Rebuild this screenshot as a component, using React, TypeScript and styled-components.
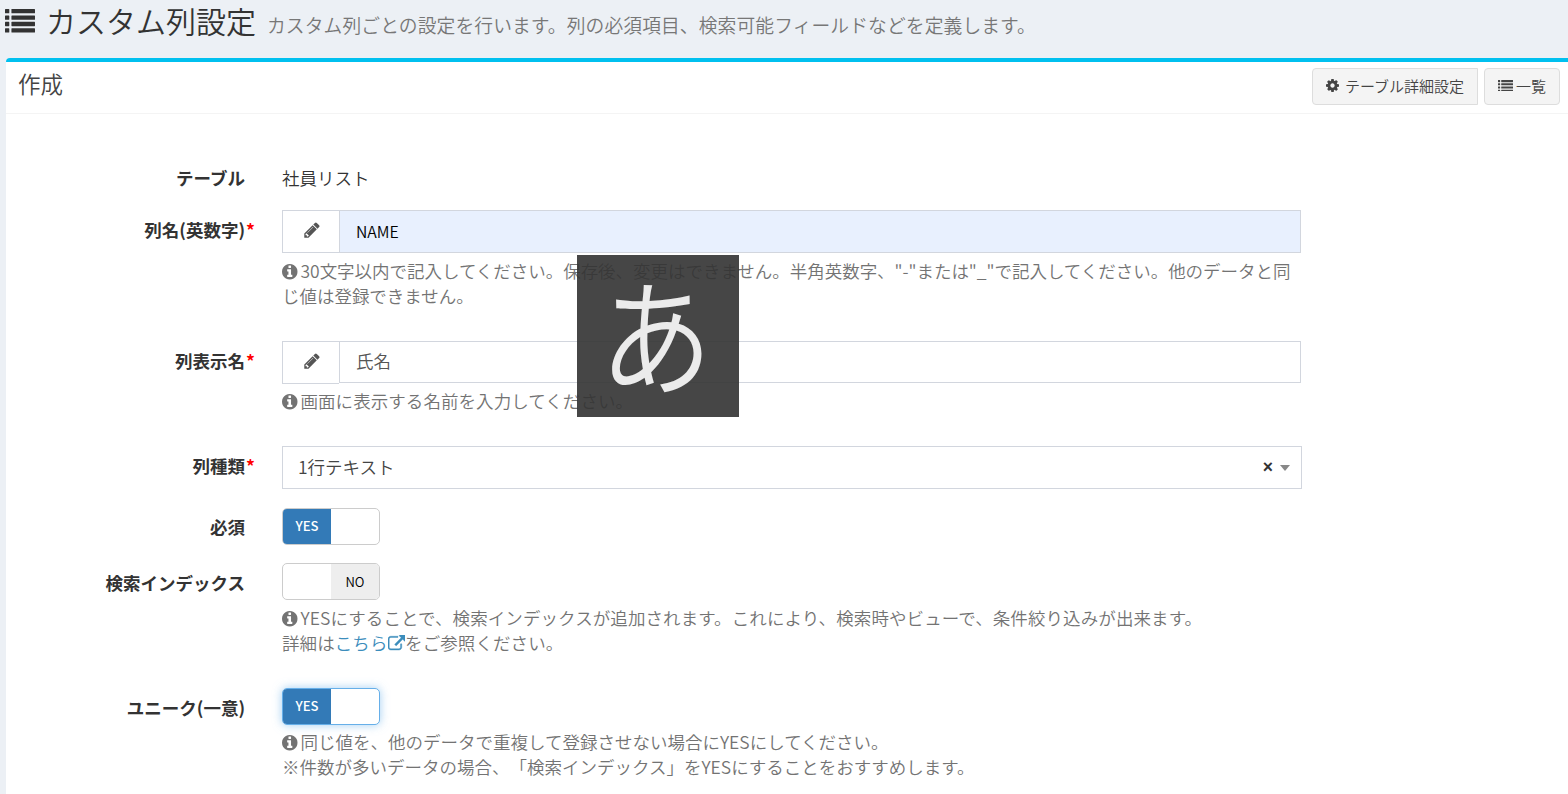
import React from 'react';
import styled, { createGlobalStyle, css } from 'styled-components';

const GlobalStyle = createGlobalStyle`
  * { box-sizing: border-box; }
  html, body { margin: 0; height: 100%; overflow: hidden; }
  body {
    background: #ecf0f5;
    color: #333;
    font-family: 'Noto Sans CJK JP', 'Noto Sans', sans-serif;
    font-size: 17.5px;
    line-height: 25px;
    font-weight: 350;
    text-spacing-trim: space-all;
  }
`;

const Page = styled.div`
  position: relative;
  height: 794px;
  display: flex;
  flex-direction: column;
  overflow: hidden;
  padding-left: 6px;
  white-space: nowrap;
`;

const PageHeader = styled.h1`
  display: flex;
  align-items: baseline;
  flex: none;
  height: 58px;
  margin: 0 0 0 -1px;
  font-size: 30px;
  line-height: 40px;
  font-weight: 350;
`;

const PageNote = styled.small`
  margin-left: 11px;
  font-size: 18.75px;
  letter-spacing: 0.11px;
  color: #777;
  font-weight: 350;
`;

const Box = styled.section`
  flex: 1;
  background: #fff;
  border-top: 4px solid #00c0ef;
  border-radius: 4px 0 0 0;
`;

const BoxHeader = styled.header`
  display: flex;
  align-items: flex-start;
  justify-content: space-between;
  height: 52px;
  padding: 6px 8px 0 12px;
  border-bottom: 1px solid #f4f4f4;
`;

const BoxTitle = styled.h3`
  margin: 0;
  font-size: 22.5px;
  line-height: 30px;
  font-weight: 350;
  color: #444;
`;

const Tools = styled.div`
  display: flex;
  gap: 6px;
`;

const ToolButton = styled.button<{ $gap: number; $radius?: string }>`
  display: flex;
  align-items: center;
  gap: ${(p) => p.$gap}px;
  height: 37px;
  padding: 0 13px 2px;
  border: 1px solid #ddd;
  border-radius: ${(p) => p.$radius ?? '4px'};
  background: #f4f4f4;
  color: #444;
  font: inherit;
  font-size: 15px;
`;

const Form = styled.form`
  display: flex;
  flex-direction: column;
  padding-top: 51px;
`;

const Row = styled.div<{ $after?: number }>`
  display: grid;
  grid-template-columns: 239px 1020px;
  column-gap: 37px;
  margin-bottom: ${(p) => p.$after ?? 33}px;
`;

const Label = styled.label<{ $top?: number }>`
  padding-top: ${(p) => p.$top ?? 7}px;
  text-align: right;
  font-weight: 700;
`;

const Required = styled.span`
  display: inline-block;
  width: 0;
  color: #f00;
  text-indent: 1px;
`;

const InputGroup = styled.div<{ $filled?: boolean }>`
  display: flex;
  align-items: flex-start;
  width: 1019px;
  height: ${(p) => (p.$filled ? 43 : 42)}px;
`;

const Addon = styled.span`
  display: flex;
  align-items: center;
  justify-content: center;
  width: 57px;
  height: 43px;
  padding: 0 0 3px 1px;
  border: 1px solid #d2d6de;
  border-right: 0;
  color: #555;
`;

const TextInput = styled.input<{ $filled?: boolean }>`
  flex: 1;
  height: ${(p) => (p.$filled ? 43 : 42)}px;
  padding: 0 16px ${(p) => (p.$filled ? 1 : 3)}px;
  border: 1px solid #d2d6de;
  border-radius: 0;
  outline: 0;
  background: ${(p) => (p.$filled ? '#e8f0fe' : '#fff')};
  color: ${(p) => (p.$filled ? '#000' : '#555')};
  font: inherit;
  font-size: ${(p) => (p.$filled ? 15.8 : 17.5)}px;
`;

const Select = styled.div`
  display: flex;
  align-items: center;
  height: 43px;
  padding: 0 11px 3px 15px;
  border: 1px solid #d2d6de;
  color: #444;
`;

const Clear = styled.span`
  margin-left: auto;
  margin-top: 3px;
  margin-right: 7px;
  font-family: 'Liberation Sans', sans-serif;
  font-weight: 700;
  color: #333;
`;

const Caret = styled.i`
  margin-top: 3px;
  border: 5px solid transparent;
  border-top: 6px solid #888;
  border-bottom: 0;
`;

const Help = styled.p<{ $top?: number; $spacing?: number }>`
  margin: ${(p) => p.$top ?? 5}px 0 0;
  color: #737373;
  font-weight: 350;
  letter-spacing: ${(p) => p.$spacing ?? 0}px;
`;

const Link = styled.a`
  color: #3c8dbc;
`;

const Switch = styled.div<{ $focus?: boolean }>`
  display: flex;
  width: 98px;
  height: 37px;
  border: 1px solid #ccc;
  border-radius: 5px;
  overflow: hidden;
  background: #fff;
  ${(p) =>
    p.$focus &&
    css`
      border-color: #66afe9;
      box-shadow: 0 0 10px rgba(102, 175, 233, 0.6);
    `}
`;

const SwitchSide = styled.span<{ $on?: boolean }>`
  display: flex;
  align-items: center;
  justify-content: center;
  width: 48px;
  height: 35px;
  padding-bottom: ${(p) => (p.$on ? 2 : 0)}px;
  margin-left: ${(p) => (p.$on ? 0 : 'auto')};
  background: ${(p) => (p.$on ? '#337ab7' : '#eee')};
  color: ${(p) => (p.$on ? '#fff' : '#000')};
  font-size: 13.1px;
  font-weight: ${(p) => (p.$on ? 500 : 350)};
`;

const ImeIndicator = styled.div`
  position: absolute;
  left: 577px;
  top: 255px;
  width: 162px;
  height: 162px;
  display: flex;
  align-items: center;
  justify-content: center;
  background: rgba(52, 52, 52, 0.91);
  color: #ebebeb;
  font-size: 127px;
  line-height: 1;
  font-weight: 350;
`;

const ImeGlyph = styled.span`
  transform: translate(-1.5px, -5.5px) scaleX(0.89);
`;

const Svg = styled.svg<{ $w: number; $h: number; $shift?: number; $right?: number }>`
  flex: none;
  width: ${(p) => p.$w}px;
  height: ${(p) => p.$h}px;
  vertical-align: ${(p) => p.$shift ?? 0}px;
  margin-right: ${(p) => p.$right ?? 0}px;
  fill: currentColor;
`;

const ListIcon = ({ size, right }: { size: number; right?: number }) => (
  <Svg $w={size} $h={(size * 1408) / 1792} $right={right} viewBox="0 0 1792 1408">
    {[0, 384, 768, 1152].map((y) => (
      <React.Fragment key={y}>
        <rect x="0" y={y} width="256" height="256" rx="32" />
        <rect x="384" y={y} width="1408" height="256" rx="32" />
      </React.Fragment>
    ))}
  </Svg>
);

const CogIcon = () => (
  <Svg $w={13} $h={13} viewBox="128 128 1536 1536">
    <path d="M1152 896q0-106-75-181t-181-75-181 75-75 181 75 181 181 75 181-75 75-181zm512-109v222q0 12-8 23t-20 13l-185 28q-19 54-39 91 35 50 107 138 10 12 10 25t-9 23q-27 37-99 108t-94 71q-12 0-26-9l-138-108q-44 23-91 38-16 136-29 186-7 28-36 28h-222q-14 0-24.5-8.5t-11.5-21.5l-28-184q-49-16-90-37l-141 107q-10 9-25 9-14 0-25-11-126-114-165-168-7-10-7-23 0-12 8-23 15-21 51-66.5t54-70.5q-27-50-41-99l-183-27q-13-2-21-12.5t-8-23.5v-222q0-12 8-23t19-13l186-28q14-46 39-92-40-57-107-138-10-12-10-24 0-10 9-23 26-36 98.5-107.5t94.5-71.5q13 0 26 10l138 107q44-23 91-38 16-136 29-186 7-28 36-28h222q14 0 24.5 8.5t11.5 21.5l28 184q49 16 90 37l142-107q9-9 24-9 13 0 25 10 129 119 165 170 7 8 7 22 0 12-8 23-15 21-51 66.5t-54 70.5q26 50 41 98l183 28q13 2 21 12.5t8 23.5z" />
  </Svg>
);

const PencilIcon = () => (
  <Svg $w={18} $h={18} viewBox="0 0 1792 1792">
    <path d="M491 1536l91-91-235-235-91 91v107h128v128h107zm523-928q0-22-22-22-10 0-17 7l-542 542q-7 7-7 17 0 22 22 22 10 0 17-7l542-542q7-7 7-17zm-54-192l416 416-832 832h-416v-416zm683 96q0 53-37 90l-166 166-416-416 166-165q36-38 90-38 53 0 91 38l235 234q37 39 37 91z" />
  </Svg>
);

const InfoIcon = () => (
  <Svg $w={15.5} $h={15.5} $shift={-1.5} $right={3} viewBox="128 128 1536 1536">
    <path d="M1152 1376v-160q0-14-9-23t-23-9h-96v-512q0-14-9-23t-23-9h-320q-14 0-23 9t-9 23v160q0 14 9 23t23 9h96v320h-96q-14 0-23 9t-9 23v160q0 14 9 23t23 9h448q14 0 23-9t9-23zm-128-896v-160q0-14-9-23t-23-9h-192q-14 0-23 9t-9 23v160q0 14 9 23t23 9h192q14 0 23-9t9-23zm640 416q0 209-103 385.5t-279.5 279.5-385.5 103-385.5-103-279.5-279.5-103-385.5 103-385.5 279.5-279.5 385.5-103 385.5 103 279.5 279.5 103 385.5z" />
  </Svg>
);

const ExternalIcon = () => (
  <Svg $w={17.5} $h={17.5} $shift={-2} viewBox="0 0 1792 1792">
    <path stroke="currentColor" strokeWidth="40" d="M1408 928v320q0 119-84.5 203.5t-203.5 84.5h-832q-119 0-203.5-84.5t-84.5-203.5v-832q0-119 84.5-203.5t203.5-84.5h704q14 0 23 9t9 23v64q0 14-9 23t-23 9h-704q-66 0-113 47t-47 113v832q0 66 47 113t113 47h832q66 0 113-47t47-113v-320q0-14 9-23t23-9h64q14 0 23 9t9 23zm384-864v512q0 26-19 45t-45 19-45-19l-176-176-652 652q-10 10-23 10t-23-10l-114-114q-10-10-10-23t10-23l652-652-176-176q-19-19-19-45t19-45 45-19h512q26 0 45 19t19 45z" />
  </Svg>
);

const Toggle = ({ on, focus }: { on?: boolean; focus?: boolean }) => (
  <Switch $focus={focus}>
    <SwitchSide $on={on}>{on ? 'YES' : 'NO'}</SwitchSide>
  </Switch>
);

export default function App() {
  return (
    <>
      <GlobalStyle />
      <Page>
        <PageHeader>
          <ListIcon size={30} right={11} />
          カスタム列設定
          <PageNote>カスタム列ごとの設定を行います。列の必須項目、検索可能フィールドなどを定義します。</PageNote>
        </PageHeader>
        <Box>
          <BoxHeader>
            <BoxTitle>作成</BoxTitle>
            <Tools>
              <ToolButton type="button" $gap={6} $radius="4px 0 0 4px">
                <CogIcon />
                テーブル詳細設定
              </ToolButton>
              <ToolButton type="button" $gap={3}>
                <ListIcon size={15} />
                一覧
              </ToolButton>
            </Tools>
          </BoxHeader>
          <Form>
            <Row $after={20}>
              <Label $top={0}>テーブル</Label>
              <div>社員リスト</div>
            </Row>
            <Row>
              <Label>列名(英数字)<Required>*</Required></Label>
              <div>
                <InputGroup $filled>
                  <Addon><PencilIcon /></Addon>
                  <TextInput $filled defaultValue="NAME" />
                </InputGroup>
                <Help $spacing={-0.03}>
                  <InfoIcon />
                  30文字以内で記入してください。保存後、変更はできません。半角英数字、"-"または"_"で記入してください。他のデータと同
                  <br />
                  じ値は登録できません。
                </Help>
              </div>
            </Row>
            <Row>
              <Label>列表示名<Required>*</Required></Label>
              <div>
                <InputGroup>
                  <Addon><PencilIcon /></Addon>
                  <TextInput defaultValue="氏名" />
                </InputGroup>
                <Help $spacing={0.06}><InfoIcon />画面に表示する名前を入力してください。</Help>
              </div>
            </Row>
            <Row $after={19}>
              <Label>列種類<Required>*</Required></Label>
              <Select>
                1行テキスト
                <Clear>×</Clear>
                <Caret />
              </Select>
            </Row>
            <Row $after={18}>
              <Label $top={6}>必須</Label>
              <Toggle on />
            </Row>
            <Row>
              <Label>検索インデックス</Label>
              <div>
                <Toggle />
                <Help $spacing={0.09}>
                  <InfoIcon />
                  YESにすることで、検索インデックスが追加されます。これにより、検索時やビューで、条件絞り込みが出来ます。
                  <br />
                  詳細は<Link>こちら<ExternalIcon /></Link>をご参照ください。
                </Help>
              </div>
            </Row>
            <Row>
              <Label>ユニーク(一意)</Label>
              <div>
                <Toggle on focus />
                <Help $top={4}>
                  <InfoIcon />
                  同じ値を、他のデータで重複して登録させない場合にYESにしてください。
                  <br />
                  ※件数が多いデータの場合、「検索インデックス」をYESにすることをおすすめします。
                </Help>
              </div>
            </Row>
          </Form>
        </Box>
        <ImeIndicator><ImeGlyph>あ</ImeGlyph></ImeIndicator>
      </Page>
    </>
  );
}
